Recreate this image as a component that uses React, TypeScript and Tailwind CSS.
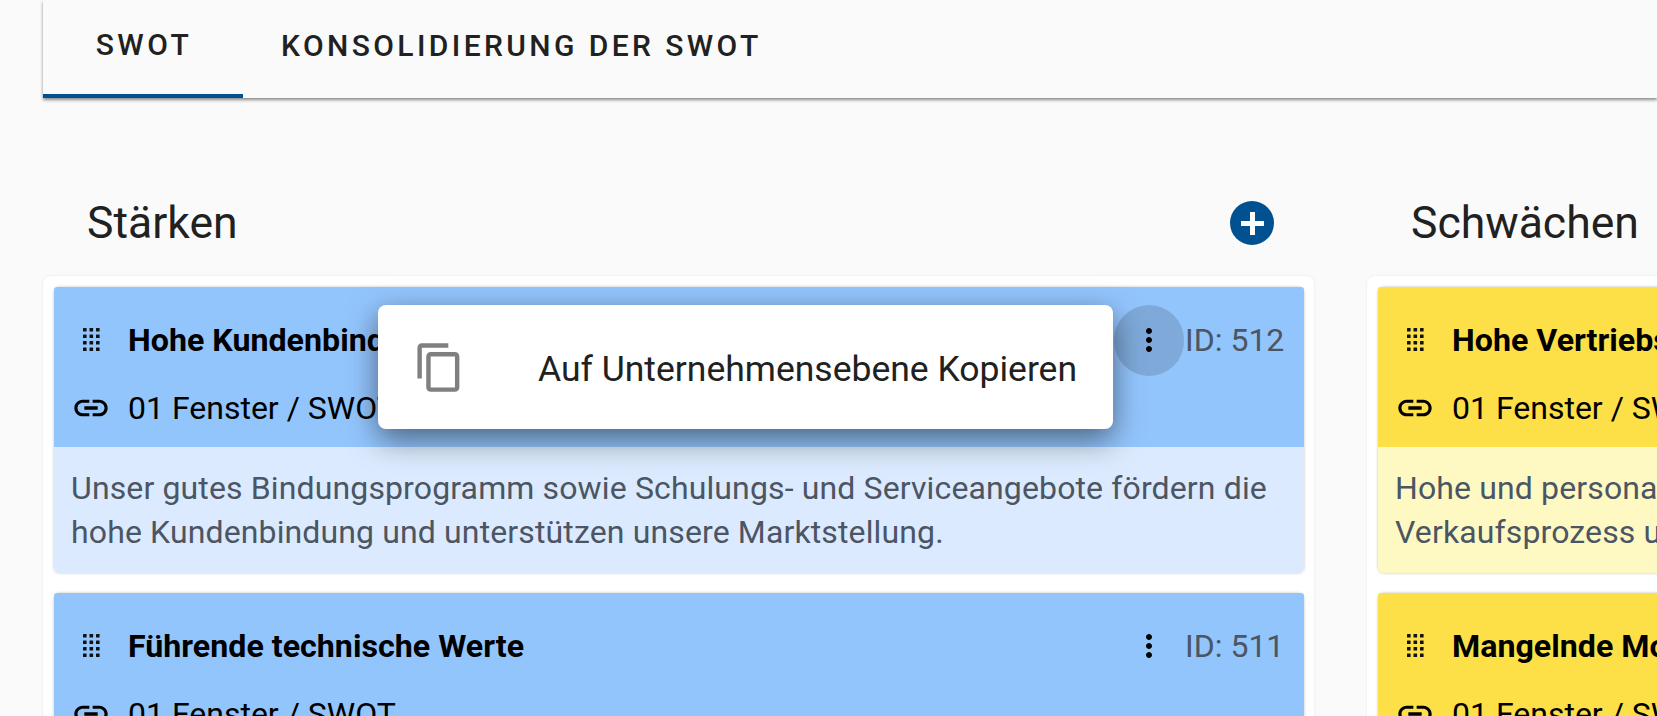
import { MdContentCopy, MdLink, MdMoreVert } from "react-icons/md";

function DragDots() {
  const xs = [0, 6.5, 13];
  const ys = [0, 6.5, 13, 19.5];
  return (
    <svg width="17" height="24" viewBox="0 0 17 24" className="shrink-0">
      {ys.map((y) =>
        xs.map((x) => <rect key={`${y}-${x}`} x={x} y={y} width="3.6" height="3.6" rx="0.5" fill="#111" />),
      )}
    </svg>
  );
}

type CardProps = {
  title: string;
  id: number;
  text?: string[];
  head: string;
  body: string;
  menuOpen?: boolean;
};

function Card({ title, id, text, head, body, menuOpen }: CardProps) {
  return (
    <div className="relative w-[1250px] shrink-0 rounded-md shadow-[0_0_3px_rgba(0,0,0,0.25)]">
      <div className={`h-[160px] rounded-t-[3px] pl-[27px] pr-[20px] pt-[32px] ${head}`}>
        <div className="flex h-[42px] items-center">
          <div className="flex w-[20px] justify-center">
            <DragDots />
          </div>
          <div className="ml-[27px] whitespace-nowrap text-[32.2px] font-bold text-black">{title}</div>
          <div className="relative ml-auto flex h-[42px] w-[36px] items-center justify-center">
            {menuOpen && <div className="absolute left-[-17px] top-[-14px] h-[71px] w-[70px] rounded-full bg-black/[0.14]" />}
            <MdMoreVert className="relative text-[36px] text-black" />
          </div>
          <div className="ml-[18px] w-[99px] whitespace-nowrap text-[32px] text-[#4b5563]">ID: {id}</div>
        </div>
        <div className="mt-[26px] flex h-[42px] items-center">
          <div className="flex w-[20px] justify-center">
            <MdLink className="shrink-0 text-[40px] text-black" />
          </div>
          <div className="ml-[27px] whitespace-nowrap text-[32px] text-black">01 Fenster / SWOT</div>
        </div>
      </div>
      {text && (
        <div className={`h-[126px] rounded-b-md px-[17px] pt-[19px] text-[32px] leading-[44px] tracking-[0.13px] text-[#4b5563] ${body}`}>
          {text.map((line) => (
            <div key={line} className="whitespace-nowrap">
              {line}
            </div>
          ))}
        </div>
      )}
    </div>
  );
}

export default function App() {
  return (
    <div className="h-[716px] w-[1657px] overflow-hidden bg-[#fafafa] font-['Roboto',sans-serif] text-[#212121]">
      <div className="ml-[43px] flex h-[98px] bg-[#fafafa] shadow-[0_2px_3px_rgba(0,0,0,0.45)]">
        <div className="flex h-[98px] w-[200px] items-center justify-center border-b-4 border-[#01508f] pb-[6px] pl-[2px] text-[30px] font-medium tracking-[3.4px]">
          SWOT
        </div>
        <div className="flex h-[98px] items-center pb-[8px] pl-[38px] text-[30px] font-medium tracking-[3.4px]">
          KONSOLIDIERUNG DER SWOT
        </div>
      </div>

      <div className="ml-[43px] flex gap-[53px] pt-[94px]">
        <div className="relative w-[1271px] shrink-0">
          <div className="flex h-[84px] items-start justify-between pl-[44px] pr-[40px]">
            <div className="text-[44.5px] leading-[63px]">Stärken</div>
            <div className="mt-[9px] flex h-[44px] w-[44px] items-center justify-center rounded-full bg-[#01508f]">
              <svg width="23" height="23" viewBox="0 0 23 23">
                <path d="M9 0h5v9h9v5h-9v9H9v-9H0V9h9z" fill="#fff" />
              </svg>
            </div>
          </div>
          <div className="flex flex-col gap-[20px] rounded-lg bg-white py-[10px] pl-[11px] pr-[10px] pt-[11px] shadow-[0_0_3px_rgba(0,0,0,0.08)]">
            <Card
              title="Hohe Kundenbindung"
              id={512}
              head="bg-[#93c5fd]"
              body="bg-[#dbeafe]"
              menuOpen
              text={[
                "Unser gutes Bindungsprogramm sowie Schulungs- und Serviceangebote fördern die",
                "hohe Kundenbindung und unterstützen unsere Marktstellung.",
              ]}
            />
            <Card title="Führende technische Werte" id={511} head="bg-[#93c5fd]" body="bg-[#dbeafe]" />
          </div>

          <div className="absolute left-[335px] top-[113px] flex h-[124px] w-[735px] items-center rounded-lg bg-white pl-[35px] shadow-[0_10px_30px_rgba(0,0,0,0.5)]">
            <MdContentCopy className="text-[53px] text-[#808080]" />
            <div className="ml-[72px] whitespace-nowrap pt-[6px] text-[35.5px] text-[#212121]">Auf Unternehmensebene Kopieren</div>
          </div>
        </div>

        <div className="w-[1271px] shrink-0">
          <div className="flex h-[84px] items-start pl-[44px]">
            <div className="text-[44.5px] leading-[63px]">Schwächen</div>
          </div>
          <div className="flex flex-col gap-[20px] rounded-lg bg-white py-[10px] pl-[11px] pr-[10px] pt-[11px] shadow-[0_0_3px_rgba(0,0,0,0.08)]">
            <Card
              title="Hohe Vertriebskosten"
              id={510}
              head="bg-[#fde047]"
              body="bg-[#fef9c3]"
              text={["Hohe und personalintensive Aufwände im", "Verkaufsprozess und in der Betreuung."]}
            />
            <Card title="Mangelnde Motivation" id={509} head="bg-[#fde047]" body="bg-[#fef9c3]" />
          </div>
        </div>
      </div>
    </div>
  );
}
